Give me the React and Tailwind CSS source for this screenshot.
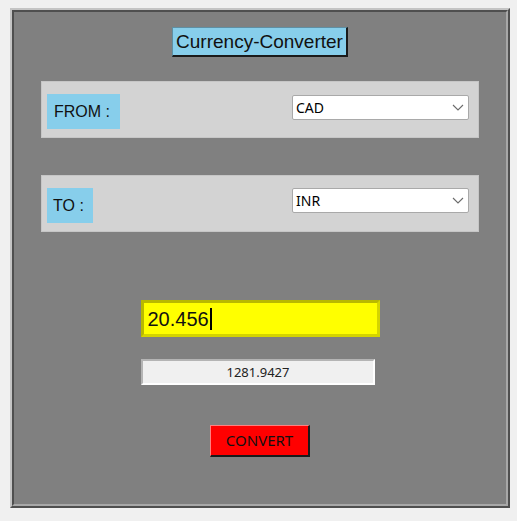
const PANEL = "w-[438px] h-[57px] bg-[#d3d3d3] border border-[#c6c6c6] flex justify-between items-start pt-[12px] pl-[5px] pr-[9px]";

function Chevron() {
  return (
    <svg width="12" height="7" viewBox="0 0 12 7" className="shrink-0">
      <polyline points="1,1 6,6 11,1" fill="none" stroke="#6b6b6b" strokeWidth="1.1" />
    </svg>
  );
}

function Combo({ value, className = "" }) {
  return (
    <div className={`w-[177px] h-[25px] bg-white border border-[#a9a9a9] rounded-[2px] flex items-center justify-between pl-[3px] pr-[4px] ${className}`}>
      <span className="text-[14px] text-black font-['Noto_Sans',sans-serif] leading-none">{value}</span>
      <Chevron />
    </div>
  );
}

export default function App() {
  return (
    <div className="w-[517px] h-[521px] bg-[#f0f0f0] pt-[8px] pl-[10px] font-['Liberation_Sans',Arial,sans-serif]">
      {/* ridge frame */}
      <div className="w-[500px] h-[500px] border-2 border-t-[#c4c4c4] border-l-[#c4c4c4] border-b-[#4f4f4f] border-r-[#4f4f4f]">
        <div className="w-full h-full border-2 border-t-[#4f4f4f] border-l-[#4f4f4f] border-b-[#a8a8a8] border-r-[#a8a8a8] bg-[#808080] flex flex-col items-center pt-[15px]">
          <div className="h-[30px] px-[3px] bg-[#87ceeb] border border-t-[#5f8fa3] border-l-[#5f8fa3] border-b-2 border-r-2 border-b-[#1a1a1a] border-r-[#1a1a1a] flex items-center text-[19px] text-[#111] leading-none">
            Currency-Converter
          </div>

          <div className={`${PANEL} mt-[24px]`}>
            <div className="w-[73px] h-[35px] bg-[#87ceeb] flex items-center pl-[7px] text-[16px] text-[#111]">FROM :</div>
            <Combo value="CAD" className="mt-[1px]" />
          </div>

          <div className={`${PANEL} mt-[37px]`}>
            <div className="w-[46px] h-[35px] bg-[#87ceeb] flex items-center pl-[6px] text-[16px] text-[#111]">TO :</div>
            <Combo value="INR" />
          </div>

          <div className="mt-[68px] w-[239px] h-[37px] bg-[#ffff00] border-[3px] border-t-[#b8b800] border-l-[#b8b800] border-b-[#d4d400] border-r-[#d4d400] flex items-center pl-[4px]">
            <div className="flex items-center h-full">
              <span className="text-[20px] text-[#111] leading-none">20.456</span>
              <span className="w-[2px] h-[22px] bg-black ml-[1px]" />
            </div>
          </div>

          <div className="mt-[22px] ml-[-4px] w-[234px] h-[26px] bg-[#f0f0f0] border-2 border-t-[#b4b4b4] border-l-[#b4b4b4] border-b-white border-r-white flex items-center justify-center text-[13px] text-[#222] font-['Noto_Sans',sans-serif] leading-none">
            1281.9427
          </div>

          <div className="mt-[40px] w-[100px] h-[32px] bg-[#ff0000] border border-t-[#ff8080] border-l-[#ff8080] border-b-2 border-r-2 border-b-[#1a1a1a] border-r-[#1a1a1a] flex items-center justify-center text-[15px] text-[#111] font-['Noto_Sans',sans-serif] leading-none">
            CONVERT
          </div>
        </div>
      </div>
    </div>
  );
}
